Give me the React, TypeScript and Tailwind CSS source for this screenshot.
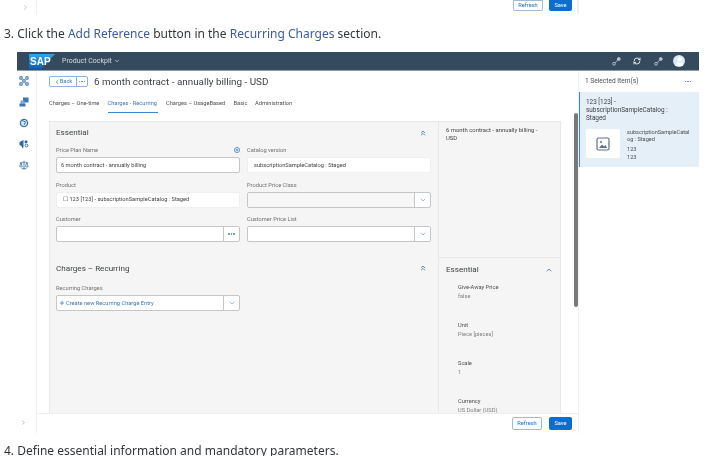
import { ChevronDown, ChevronRight, ChevronUp, ChevronLeft, ChevronsUp, Plus, Scale, RefreshCw, User } from 'lucide-react';

function Field({ label, children }: { label: string; children: React.ReactNode }) {
  return (
    <div>
      <div className="h-[10px] mb-[2px] text-[5.7px] leading-[10px] text-[#6f7173]">{label}</div>
      {children}
    </div>
  );
}

function Box({ text, plain, disabled, btn }: { text?: string; plain?: boolean; disabled?: boolean; btn?: 'dots' | 'down' }) {
  return (
    <div
      className={`flex h-[16px] rounded-[2px] border ${plain ? 'border-[#efefef]' : 'border-[#c4c6c8]'} ${
        disabled ? 'bg-[#f7f7f7]' : 'bg-white'
      }`}
    >
      <div className={`flex flex-1 items-center ${plain ? 'px-[6px]' : 'px-[4px]'} text-[5.7px] text-[#3f4245] whitespace-nowrap`}>{text}</div>
      {btn && (
        <div className="flex w-[16px] items-center justify-center border-l border-[#c4c6c8] bg-white rounded-r-[2px]">
          {btn === 'dots' ? <Dots /> : <ChevronDown size={8} className="text-[#6f9bc8]" />}
        </div>
      )}
    </div>
  );
}

function Dots() {
  return (
    <span className="flex gap-[1px]">
      <i className="size-[1.5px] rounded-full bg-[#4f7db5]" />
      <i className="size-[1.5px] rounded-full bg-[#4f7db5]" />
      <i className="size-[1.5px] rounded-full bg-[#4f7db5]" />
    </span>
  );
}

function Attr({ name, value }: { name: string; value: string }) {
  return (
    <div className="h-[38px] shrink-0 pl-[19px]">
      <div className="h-[9px] text-[5.7px] leading-[9px] text-[#4a4d50]">{name}</div>
      <div className="h-[8px] text-[5.7px] leading-[8px] text-[#7f8183]">{value}</div>
    </div>
  );
}

function NavCluster() {
  return (
    <svg width="10" height="10" viewBox="0 0 10 10" fill="none" stroke="#4d7fb8" strokeWidth="1.2">
      <circle cx="2" cy="2" r="1.3" />
      <circle cx="8" cy="2" r="1.3" />
      <circle cx="2" cy="8" r="1.3" />
      <circle cx="8" cy="8" r="1.3" />
      <circle cx="5" cy="5" r="1.3" />
    </svg>
  );
}

function NavStack() {
  return (
    <svg width="10" height="10" viewBox="0 0 10 10">
      <rect x="4" y="0.5" width="5.5" height="5" fill="#3f75b0" />
      <rect x="1.5" y="3.5" width="4" height="3" fill="#7ea6d0" />
      <rect x="0.5" y="6.5" width="6" height="3" fill="#3f75b0" />
    </svg>
  );
}

function NavGlobe() {
  return (
    <svg width="10" height="10" viewBox="0 0 10 10">
      <circle cx="5" cy="5" r="3.6" fill="#dfe9f4" stroke="#3f75b0" strokeWidth="1.4" />
      <path d="M3 2.5 L6.5 4 L5 7" fill="none" stroke="#3f75b0" strokeWidth="1" />
    </svg>
  );
}

function NavMega() {
  return (
    <svg width="10" height="10" viewBox="0 0 10 10">
      <path d="M0.5 3 L4.5 1 V8 L3.5 9.5 L2.5 7 L0.5 6 Z" fill="#2f68a6" />
      <circle cx="7" cy="2.8" r="1.5" fill="#2f68a6" />
      <circle cx="7.5" cy="6.5" r="1.4" fill="none" stroke="#2f68a6" strokeWidth="0.9" />
    </svg>
  );
}

function HeadNodes() {
  return (
    <svg width="9" height="9" viewBox="0 0 9 9" fill="none" stroke="#b9c4cf" strokeWidth="0.9">
      <circle cx="2" cy="6.8" r="1.4" />
      <circle cx="6.8" cy="2" r="1.4" fill="#b9c4cf" />
      <path d="M3 5.8 L5.8 3" />
    </svg>
  );
}

export default function App() {
  return (
    <div className="h-[456px] w-[717px] overflow-hidden bg-white font-[Roboto,sans-serif] text-[#32363a] blur-[0.3px]">
      {/* bottom of the previous screenshot */}
      <div className="flex h-[14px] pl-[17px]">
        <div className="flex w-[20px] items-center justify-center border-r border-[#f0f0f0] pr-[2px]">
          <ChevronRight size={7} className="text-[#6f9bc8]" />
        </div>
        <div className="flex w-[542px] justify-end gap-[6px] border-r-2 border-[#f0f0f0] pr-[5px]">
          <div className="flex h-[11px] w-[30px] items-center justify-center rounded-b-[2px] border border-[#9dbbdc] text-[5.7px] text-[#2f6cb3]">
            Refresh
          </div>
          <div className="flex h-[11px] w-[23px] items-center justify-center rounded-b-[2px] bg-[#0a6ed1] text-[5.7px] text-white">
            Save
          </div>
        </div>
      </div>

      <p className="h-[38px] pl-[4px] pt-[11px] font-['Noto_Sans',sans-serif] text-[12px] leading-[18px] whitespace-nowrap">
        3. Click the <span className="text-[#3c5b9b]">Add Reference</span> button in the{' '}
        <span className="text-[#3c5b9b]">Recurring Charges</span> section.
      </p>

      <div className="ml-[17px] w-[682px]">
        {/* shell bar */}
        <div className="flex h-[19px] items-center border-b border-[#8d9aa7] bg-[#354a5f]">
          <svg width="26" height="15" viewBox="0 0 26 15" className="ml-[12px] shrink-0">
            <defs>
              <linearGradient id="sap" x1="0" y1="0" x2="0" y2="1">
                <stop offset="0" stopColor="#2fa6ea" />
                <stop offset="1" stopColor="#0a5fb4" />
              </linearGradient>
            </defs>
            <polygon points="0,0 26,0 12,15 0,15" fill="url(#sap)" />
            <text x="1" y="11" fontSize="10" fontWeight="700" fill="#fff" fontFamily="Liberation Sans, sans-serif">
              SAP
            </text>
          </svg>
          <span className="ml-[7px] text-[7px] text-[#d5dbe1]">Product Cockpit</span>
          <ChevronDown size={6} strokeWidth={3} className="ml-[2px] text-[#d5dbe1]" />
          <div className="ml-auto mr-[14px] flex items-center gap-[12px]">
            <HeadNodes />
            <span className="flex w-[9px] justify-center">
              <RefreshCw size={8} className="text-white" strokeWidth={2.5} />
            </span>
            <HeadNodes />
            <div className="-ml-[1.5px] flex size-[12px] items-center justify-center overflow-hidden rounded-full bg-[#dbe8f7]">
              <User size={11} className="fill-white text-white" />
            </div>
          </div>
        </div>

        <div className="flex h-[362px]">
          {/* left nav */}
          <div className="flex w-[20px] shrink-0 flex-col items-center border-r border-[#f0f0f0] pt-[5px] pr-[6px]">
            <div className="flex flex-1 flex-col items-center gap-[11px]">
              <NavCluster />
              <NavStack />
              <NavGlobe />
              <NavMega />
              <Scale size={10} className="text-[#3f75b0]" />
            </div>
            <ChevronRight size={7} className="mb-[7px] text-[#6f9bc8]" />
          </div>

          {/* main */}
          <div className="relative flex w-[541px] shrink-0 flex-col">
            <div className="flex-1 overflow-hidden pl-[12px]">
              <div className="mt-[5px] flex h-[11px] items-center">
                <div className="flex h-[11px] items-center rounded-[2px] border border-[#8fb3d9] text-[5.7px] text-[#3f75b0]">
                  <span className="flex h-full w-[27px] items-center justify-center border-r border-[#8fb3d9]">
                    <ChevronLeft size={6} strokeWidth={3} />
                    Back
                  </span>
                  <span className="flex w-[10px] justify-center">
                    <Dots />
                  </span>
                </div>
                <h1 className="ml-[6px] text-[9.9px] leading-[11px] whitespace-nowrap text-[#3f4245]">
                  6 month contract - annually billing - USD
                </h1>
              </div>

              <div className="mt-[9px] flex h-[17px] gap-[8.5px] text-[5.7px] text-[#4a4d50]">
                <span className="w-[50px] whitespace-nowrap pt-[3px]">Charges – One-time</span>
                <span className="w-[50px] whitespace-nowrap border-b border-[#3f86d0] pt-[3px] text-[#3f75b0]">
                  Charges - Recurring
                </span>
                <span className="w-[59px] whitespace-nowrap pt-[3px]">Charges – UsageBased</span>
                <span className="w-[13px] pt-[3px]">Basic</span>
                <span className="whitespace-nowrap pt-[3px]">Administration</span>
              </div>

              <div className="mt-[8px] flex h-[292px] w-[512px] overflow-hidden border-t border-l border-r border-[#e8e8e8] bg-[#f5f5f5]">
                <div className="w-[388px] shrink-0 px-[6px]">
                  <div className="flex h-[23px] items-center justify-between pr-[3px] pb-[2px] text-[8.1px] text-[#3f4245]">
                    Essential
                    <ChevronsUp size={8} strokeWidth={2.5} className="mr-[2px] text-[#3f75b0]" />
                  </div>
                  <div className="grid grid-cols-[184px_184px] gap-x-[7px] gap-y-[6.5px]">
                    <div className="relative">
                      <Field label="Price Plan Name">
                        <Box text="6 month contract - annually billing" />
                      </Field>
                      <span className="absolute right-[0px] top-[2px] flex size-[6px] items-center justify-center rounded-full border border-[#5b8cc0]">
                        <i className="size-[2px] rounded-full bg-[#5b8cc0]" />
                      </span>
                    </div>
                    <Field label="Catalog version">
                      <Box text="subscriptionSampleCatalog : Staged" plain />
                    </Field>
                    <Field label="Product">
                      <Box text="☐ 123 [123] - subscriptionSampleCatalog : Staged" plain />
                    </Field>
                    <Field label="Product Price Class">
                      <Box disabled btn="down" />
                    </Field>
                    <Field label="Customer">
                      <Box btn="dots" />
                    </Field>
                    <Field label="Customer Price List">
                      <Box btn="down" />
                    </Field>
                  </div>

                  <div className="mt-[18px] flex h-[16px] items-center justify-between pr-[3px] text-[8.1px] text-[#3f4245]">
                    Charges – Recurring
                    <ChevronsUp size={8} strokeWidth={2.5} className="mr-[2px] text-[#3f75b0]" />
                  </div>
                  <div className="mt-[7px] w-[184px]">
                    <Field label="Recurring Charges">
                      <div className="flex h-[16px] rounded-[2px] border border-[#c4c6c8] bg-white">
                        <div className="flex flex-1 items-center gap-[1px] px-[2px] text-[5.7px] text-[#3f75b0] whitespace-nowrap">
                          <Plus size={6} strokeWidth={3} />
                          Create new Recurring Charge Entry
                        </div>
                        <div className="flex w-[16px] items-center justify-center border-l border-[#c4c6c8]">
                          <ChevronDown size={8} className="text-[#6f9bc8]" />
                        </div>
                      </div>
                    </Field>
                  </div>
                </div>

                <div className="flex flex-1 flex-col border-l border-[#e8e8e8]">
                  <div className="h-[136px] shrink-0 border-b border-[#e8e8e8] px-[7px] pt-[4px] text-[5.9px] leading-[8px] text-[#3f4245]">
                    6 month contract - annually billing -<br />
                    USD
                  </div>
                  <div className="flex h-[22px] shrink-0 items-center justify-between px-[7px] pt-[1px] text-[8.1px] text-[#3f4245]">
                    Essential
                    <ChevronUp size={8} strokeWidth={2.5} className="text-[#3f75b0]" />
                  </div>
                  <div className="pt-[3px]">
                    <Attr name="Give-Away Price" value="false" />
                    <Attr name="Unit" value="Piece [pieces]" />
                    <Attr name="Scale" value="1" />
                    <Attr name="Currency" value="US Dollar (USD)" />
                  </div>
                </div>
              </div>
            </div>

            {/* scrollbar lies over the page edge */}
            <div className="absolute right-0 top-[42px] h-[194px] w-[4px] rounded-[2px] bg-[#77797b]" />

            <div className="flex h-[20px] shrink-0 items-center justify-end gap-[7px] border-t border-[#efefef] pr-[6px]">
              <div className="flex h-[13px] w-[30px] items-center justify-center rounded-[2px] border border-[#9dbbdc] text-[5.7px] text-[#2f6cb3]">
                Refresh
              </div>
              <div className="flex h-[13px] w-[23px] items-center justify-center rounded-[2px] bg-[#0a6ed1] text-[5.7px] text-white">
                Save
              </div>
            </div>
          </div>

          {/* selected items */}
          <div className="flex-1 border-l border-[#f0f0f0]">
            <div className="flex h-[21px] items-center justify-between pl-[6px] pr-[8px] text-[6.6px] text-[#4a4d50]">
              1 Selected Item(s)
              <Dots />
            </div>
            <div className="h-[75px] border-l border-[#3f86d0] bg-[#e5eff8] pl-[6px] pt-[6px]">
              <div className="text-[6.4px] leading-[8px] text-[#3f4245]">
                123 [123] -<br />
                subscriptionSampleCatalog :<br />
                Staged
              </div>
              <div className="mt-[7px] flex">
                <div className="flex h-[29px] w-[34px] items-center justify-center rounded-[2px] bg-white">
                  <svg width="14" height="14" viewBox="0 0 14 14" fill="none">
                    <rect x="1" y="1" width="12" height="12" rx="1.5" stroke="#5b7188" strokeWidth="1.2" />
                    <circle cx="5" cy="5" r="1" fill="#5b7188" />
                    <path d="M3 11 L6 7.5 L8 9.5 L9.5 8 L11 11 Z" fill="#5b7188" />
                  </svg>
                </div>
                <div className="ml-[7px] w-[65px] break-all text-[5.6px] leading-[8px] text-[#4a4d50]">
                  <div className="leading-[7px]">subscriptionSampleCatalog : Staged</div>
                  <div className="mt-[2px]">123</div>
                  <div>123</div>
                </div>
              </div>
            </div>
          </div>
        </div>
      </div>

      <p className="pl-[4px] pt-[9px] font-['Noto_Sans',sans-serif] text-[12px] leading-[18px] whitespace-nowrap">
        4. Define essential information and mandatory parameters.
      </p>
    </div>
  );
}
